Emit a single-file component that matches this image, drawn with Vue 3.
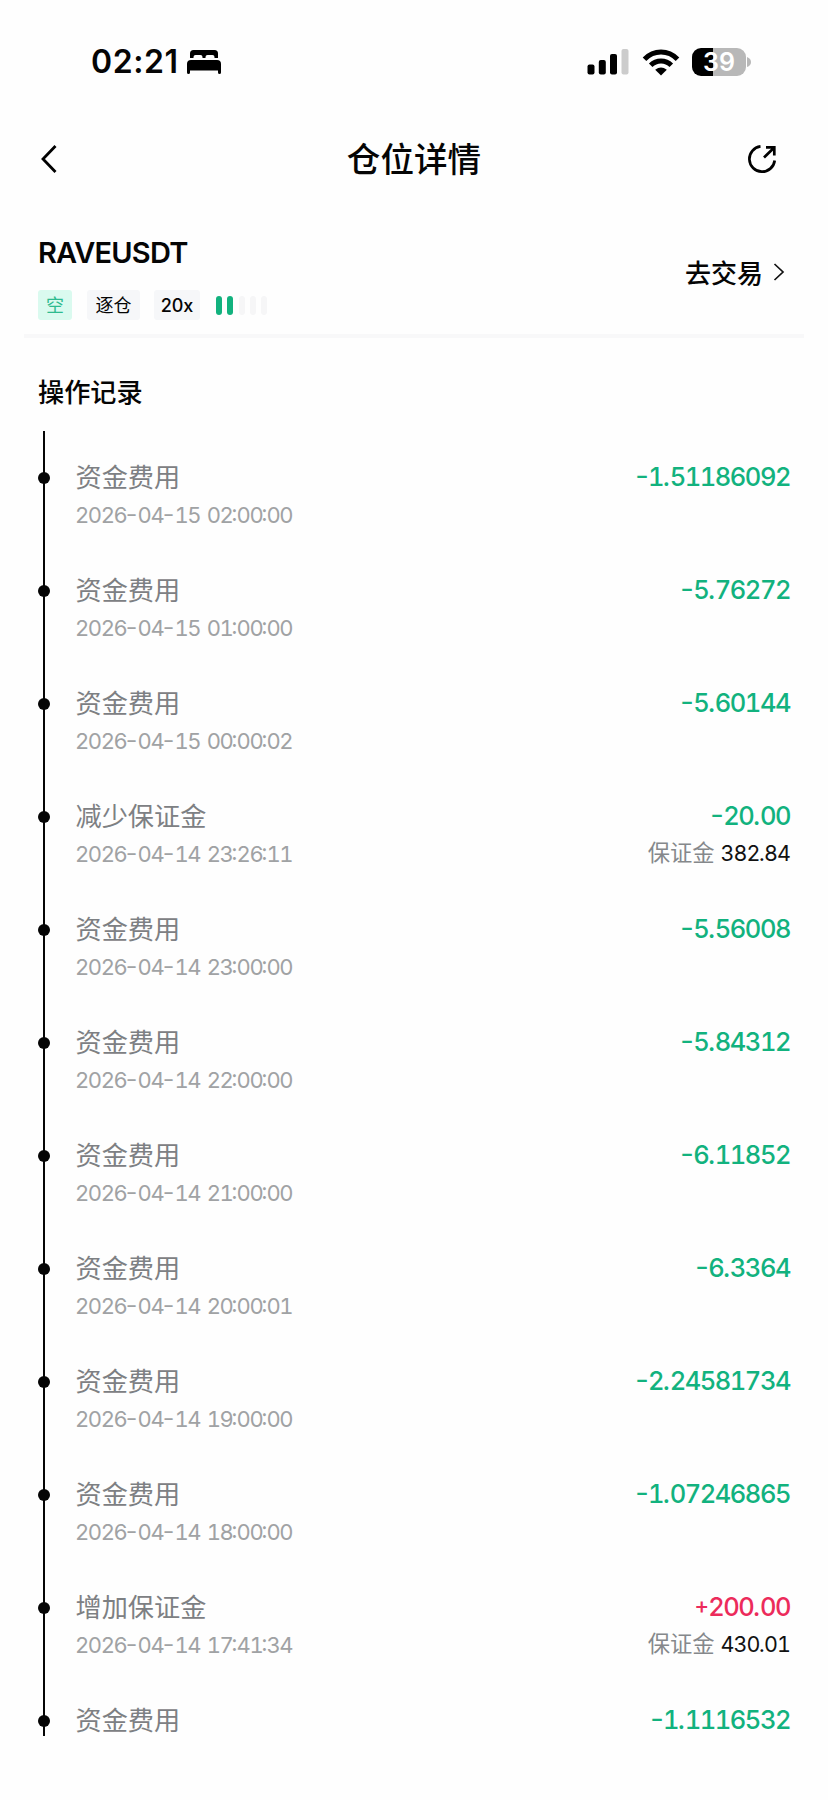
<script setup>
const fee = '资金费用'
const records = [
  { title: fee, time: '2026-04-15 02:00:00', amount: '-1.51186092' },
  { title: fee, time: '2026-04-15 01:00:00', amount: '-5.76272' },
  { title: fee, time: '2026-04-15 00:00:02', amount: '-5.60144' },
  { title: '减少保证金', time: '2026-04-14 23:26:11', amount: '-20.00', margin: '382.84' },
  { title: fee, time: '2026-04-14 23:00:00', amount: '-5.56008' },
  { title: fee, time: '2026-04-14 22:00:00', amount: '-5.84312' },
  { title: fee, time: '2026-04-14 21:00:00', amount: '-6.11852' },
  { title: fee, time: '2026-04-14 20:00:01', amount: '-6.3364' },
  { title: fee, time: '2026-04-14 19:00:00', amount: '-2.24581734' },
  { title: fee, time: '2026-04-14 18:00:00', amount: '-1.07246865' },
  { title: '增加保证金', time: '2026-04-14 17:41:34', amount: '+200.00', margin: '430.01' },
  { title: fee, amount: '-1.1116532' },
]
const riskBars = [true, true, false, false, false]
const kinds = { '-': 'dash', '+': 'plus', ':': 'colon', '.': 'point', ' ': 'gap' }
// Digits keep a tabular pitch, separators get their own narrower widths.
const parts = (s) => s.match(/\d+|\D/g).map((t) => ({ t, kind: kinds[t] || 'digits' }))
</script>

<template>
  <main class="screen">
    <div class="status">
      <span class="clock">02:21</span>
      <svg class="bed" width="36" height="26" viewBox="0 0 36 26">
        <path d="M4 9V4.500Q4 1 7.500 1H28.500Q32 1 32 4.500V9H28.500V8Q28.500 6 26.500 6H21.500Q19.500 6 19.500 8V9H16.500V8Q16.500 6 14.500 6H9.500Q7.500 6 7.500 8V9Z" />
        <path d="M1 23.500V15Q1 11 5 11H31Q35 11 35 15V23.500Q35 25 33.500 25Q32 25 32 23.500V21.500H4V23.500Q4 25 2.500 25Q1 25 1 23.500Z" />
      </svg>
      <div class="indicators">
        <svg width="43" height="27" viewBox="0 0 43 27">
          <rect x="0.500" y="16.500" width="7" height="10" rx="2" />
          <rect x="11.800" y="12" width="7" height="14.500" rx="2" />
          <rect x="23" y="6" width="7" height="20.500" rx="2" />
          <rect x="34.500" y="1" width="7" height="25.500" rx="2" fill="#ccc" />
        </svg>
        <svg class="wifi" width="38" height="28" viewBox="0 0 38 28">
          <g fill="none" stroke="#000" stroke-width="5">
            <path d="M2.500 11.200Q9.500 4 19 4T35.500 11.200" />
            <path d="M8.700 17.300Q13 13 19 13T29.300 17.300" />
          </g>
          <path d="M13.200 21.800Q19 17 24.800 21.800L19 27.500Z" />
        </svg>
        <div class="battery"><span>39</span></div>
        <svg class="nub" width="4" height="10" viewBox="0 0 4 10"><path d="M0 0Q4 1.500 4 5T0 10Z" fill="#b8b8b8" /></svg>
      </div>
    </div>

    <header class="nav">
      <svg width="18" height="30" viewBox="0 0 18 30"><path d="M15.500 2L3 15L15.500 28" fill="none" stroke="#000" stroke-width="2.800" /></svg>
      <h1>仓位详情</h1>
      <svg width="32" height="32" viewBox="0 0 32 32" fill="none" stroke="#000" stroke-width="2.700">
        <path d="M14.500 3.400A12.700 12.700 0 1 0 28.700 17.500" />
        <path d="M18 14.500L28 4.800M20 4.300H28.300V12.500" />
      </svg>
    </header>

    <section class="position">
      <div>
        <h2>RAVEUSDT</h2>
        <div class="tags">
          <span class="tag short">空</span>
          <span class="tag isolated">逐仓</span>
          <span class="tag lever">20x</span>
          <div class="risk"><i v-for="(on, i) in riskBars" :key="i" :class="{ on }"></i></div>
        </div>
      </div>
      <div class="trade">
        <span>去交易</span>
        <svg width="12" height="18" viewBox="0 0 12 18"><path d="M1.500 1L10 9L1.500 17" fill="none" stroke="#111" stroke-width="1.700" /></svg>
      </div>
    </section>

    <h3>操作记录</h3>
    <ul class="timeline">
      <li v-for="(r, i) in records" :key="i">
        <i class="dot"></i>
        <div class="event">
          <div class="title">{{ r.title }}</div>
          <div v-if="r.time" class="time num"><span v-for="(p, k) in parts(r.time)" :key="k" :class="p.kind">{{ p.t }}</span></div>
        </div>
        <div class="value">
          <div class="amount num" :class="{ gain: r.amount[0] === '+' }"><span v-for="(p, k) in parts(r.amount)" :key="k" :class="p.kind">{{ p.t }}</span></div>
          <div v-if="r.margin" class="margin">保证金<b class="num"><span v-for="(p, k) in parts(r.margin)" :key="k" :class="p.kind">{{ p.t }}</span></b></div>
        </div>
      </li>
    </ul>
  </main>
</template>

<style>
body { margin: 0; background: #fefefe; }
</style>

<style scoped>
.screen { box-sizing: border-box; width: 828px; height: 1800px; overflow: hidden; background: #fefefe; color: #050505; font-family: Inter, "Noto Sans CJK SC", sans-serif; }
h1, h2, h3, ul { margin: 0; padding: 0; }
svg { display: block; flex: none; }
.status { display: flex; align-items: center; height: 124px; padding: 0 77px 0 91px; box-sizing: border-box; }
.clock { width: 95px; font-size: 32px; font-weight: 580; letter-spacing: 0.600px; white-space: nowrap; margin-top: -1px; }
.indicators { display: flex; align-items: center; margin-left: auto; margin-top: -1px; }
.wifi { margin-left: 12.500px; }
.battery { width: 54px; height: 28px; margin-left: 12px; border-radius: 9px; background: linear-gradient(90deg, #000 38%, #b8b8b8 38%); color: #fff; font-size: 25px; font-weight: 600; line-height: 28px; text-align: center; }
.nub { margin-left: 1px; }
.nav { display: flex; align-items: center; justify-content: space-between; height: 70px; padding: 0 50px 0 40px; }
.nav h1 { font-size: 33.600px; line-height: 68px; padding-top: 2px; font-weight: 500; margin-left: 24px; }
.position { display: flex; justify-content: space-between; box-sizing: border-box; height: 144px; margin: 0 24px; padding: 42px 19px 0 14px; border-bottom: 4px solid #f8f8f9; }
h2 { font-size: 29px; line-height: 34px; font-weight: 600; letter-spacing: -0.800px; }
.tags { display: flex; align-items: center; margin-top: 20px; }
.tag { height: 30px; border-radius: 3px; background: #f6f7f9; font-size: 18px; line-height: 31px; text-align: center; }
.short { width: 34px; background: #dafaef; color: #2fbb8f; }
.isolated { width: 53px; margin-left: 15px; }
.lever { width: 46px; margin-left: 14px; font-weight: 450; }
.risk { display: flex; gap: 5.300px; margin: 1px 0 0 16px; }
.risk i { width: 6px; height: 19px; border-radius: 3px; background: #f6f6f7; }
.risk .on { background: #12b27e; }
.trade { display: flex; align-items: center; gap: 10px; height: 70px; font-size: 26px; font-weight: 500; }
.trade svg { margin-top: 2px; }
h3 { height: 93px; padding: 35px 0 0 38px; box-sizing: border-box; font-size: 26.200px; line-height: 40px; font-weight: 500; }
.timeline { height: 1305px; list-style: none; margin-left: 38px; margin-right: 38px; background: linear-gradient(#050505, #050505) 5px 0 / 2px 100% no-repeat; padding-top: 28px; box-sizing: border-box; }
li { display: flex; height: 113px; }
.dot { width: 12px; height: 12px; margin: 13px 0 0 -0.500px; border-radius: 50%; background: #050505; flex: none; }
.event { margin-left: 26px; }
.title { font-size: 26.200px; line-height: 38px; color: #7d8083; }
.num { display: flex; white-space: nowrap; font-feature-settings: "case"; }
.num span { display: flex; justify-content: center; }
.num .digits { font-feature-settings: "tnum"; }
.num .dash { transform: scaleX(1.150); }
.time { margin-left: -0.500px; font-size: 22px; line-height: 37px; color: #a0a2a4; }
.time .digits { letter-spacing: -1.450px; }
.time .dash { width: 11.300px; }
.time .colon { width: 4.300px; }
.time .gap { width: 6.500px; }
.value { margin-left: auto; text-align: right; }
.amount { justify-content: flex-end; font-size: 25.500px; line-height: 36px; font-weight: 500; color: #12b27e; }
.amount .digits { letter-spacing: -1.480px; }
.amount .dash { width: 12px; }
.amount .plus { width: 13.500px; transform: scale(0.880); }
.amount .point { width: 6.600px; }
.gain { color: #ec2b5b; }
.margin { display: flex; justify-content: flex-end; font-size: 22.300px; line-height: 38px; color: #85888b; }
.margin b { margin-left: 6px; font-size: 21.500px; font-weight: 400; color: #111; }
.margin .digits { letter-spacing: -0.950px; }
.margin .point { width: 4.500px; }
</style>
